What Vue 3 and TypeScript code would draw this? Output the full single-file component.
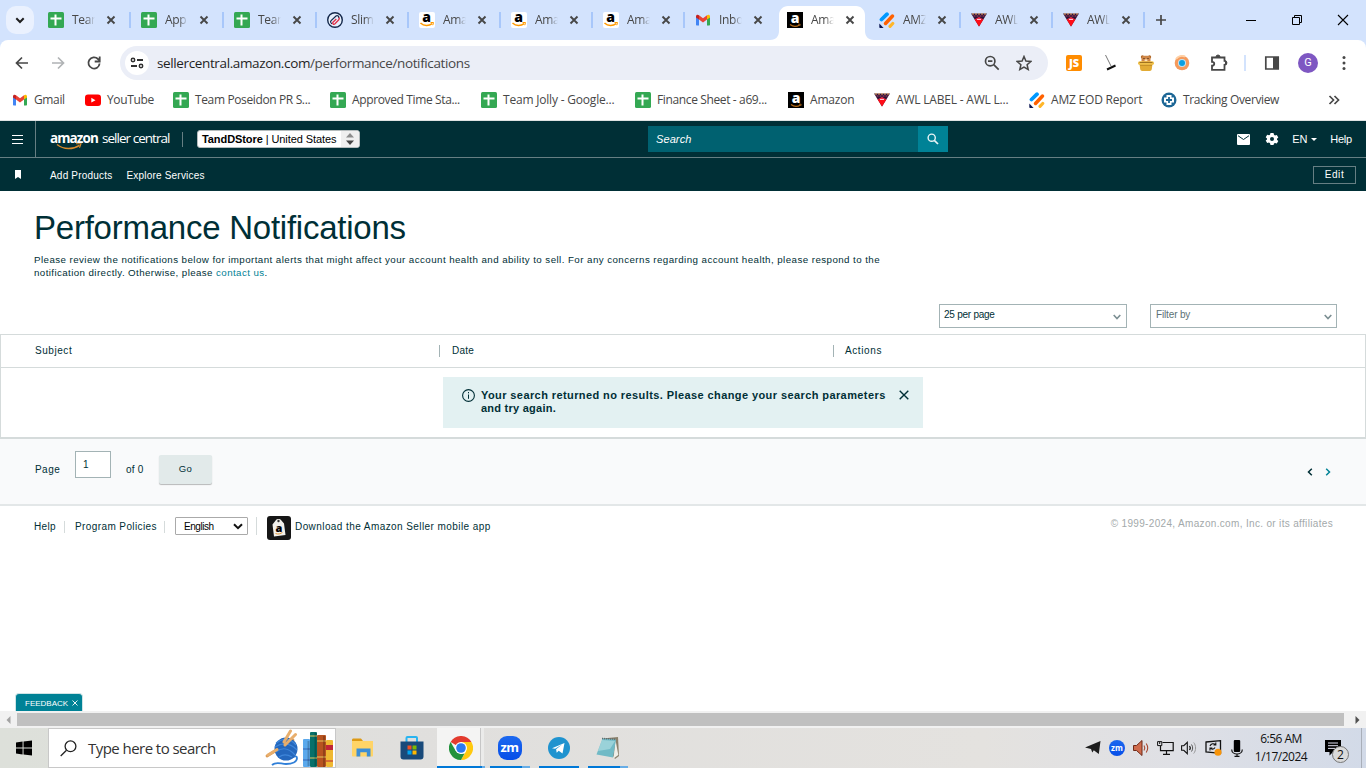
<script setup lang="ts">
interface Tab { icon: string; title: string; active?: boolean; sep?: boolean; wide?: boolean }
const tabs: Tab[] = [
  { icon: 'sheet', title: 'Team', sep: true, wide: true },
  { icon: 'sheet', title: 'App', sep: true, wide: true },
  { icon: 'sheet', title: 'Team', sep: true, wide: true },
  { icon: 'slim', title: 'Slim', sep: true },
  { icon: 'amzw', title: 'Ama', sep: true },
  { icon: 'amzw', title: 'Ama', sep: true },
  { icon: 'amzw', title: 'Ama', sep: true },
  { icon: 'gmail', title: 'Inbox' },
  { icon: 'amzb', title: 'Ama', active: true },
  { icon: 'eod', title: 'AMZ', sep: true },
  { icon: 'awl', title: 'AWL', sep: true },
  { icon: 'awl', title: 'AWL', sep: true },
]
const bookmarks: { icon: string; title: string; cls?: string }[] = [
  { icon: 'gmail', title: 'Gmail', cls: 'tight' },
  { icon: 'youtube', title: 'YouTube', cls: 'tight' },
  { icon: 'sheet', title: 'Team Poseidon PR S...', cls: 'tight' },
  { icon: 'sheet', title: 'Approved Time Sta...', cls: 'tight' },
  { icon: 'sheet', title: 'Team Jolly - Google...' },
  { icon: 'sheet', title: 'Finance Sheet - a69...', cls: 'tight' },
  { icon: 'amzb', title: 'Amazon' },
  { icon: 'awl', title: 'AWL LABEL - AWL L...' },
  { icon: 'eod', title: 'AMZ EOD Report' },
  { icon: 'track', title: 'Tracking Overview', cls: 'tight' },
]
</script>

<template>
  <div class="screen">
    <svg class="defs" width="0" height="0">
      <symbol id="sheet" viewBox="0 0 16 16"><rect width="16" height="16" rx="1.5" fill="#34a853" /><path d="M2.5 6.5h11M7.5 2.5v11" stroke="#fff" stroke-width="2" /></symbol>
      <symbol id="slim" viewBox="0 0 16 16"><circle cx="8" cy="8" r="7.3" fill="#e6effc" stroke="#14284b" stroke-width="1.4" /><path d="M5 12 3.8 10.500c-.5-.8-.3-1.300.3-1.900L9 4c1.500-1.200 3.600.6 2.500 2.200" fill="none" stroke="#14284b" stroke-width="1.2" /><path d="M11.800 5.500c.8.9.6 1.700 0 2.300L8 11.800c-1.400 1.200-3-.4-2-1.600L9.300 7" fill="none" stroke="#e02d45" stroke-width="1.300" /></symbol>
      <symbol id="amzw" viewBox="0 0 16 16"><rect width="16" height="16" rx="2" fill="#fff" /><text x="7.6" y="10" text-anchor="middle" font-family="Open Sans" font-weight="800" font-size="14">a</text><path d="M1.500 11c3.500 3.200 8.300 3.100 11.700.6" fill="none" stroke="#f90" stroke-width="1.500" /><path d="M11.500 10.500h3l-.7 2.700" fill="none" stroke="#f90" /></symbol>
      <symbol id="amzb" viewBox="0 0 16 16"><rect width="16" height="16" fill="#000" /><text x="8" y="11" text-anchor="middle" font-family="Open Sans" font-weight="800" font-size="14" fill="#fff">a</text><path d="M3 12.500c3 2.300 6.500 2.300 9.500.4" fill="none" stroke="#b56b18" stroke-width="1.200" /><path d="M11 12.200h2.200l-.5 1.800" fill="none" stroke="#b56b18" stroke-width=".8" /></symbol>
      <symbol id="gmail" viewBox="0 0 16 16"><path d="M1 4v8.500c0 .6.400 1 1 1h2V6.500z" fill="#4285f4" /><path d="M15 4v8.500c0 .6-.4 1-1 1h-2V6.500z" fill="#34a853" /><path d="M4 3.200 8 6.300l4-3.100v4.300l-4 3-4-3z" fill="#ea4335" /><path d="M1 4.500C1 2.500 2.800 2.200 4 3.200v4.300L1 5.400z" fill="#c5221f" /><path d="M15 4.500c0-2-1.800-2.300-3-1.300v4.300l3-2.100z" fill="#fbbc04" /></symbol>
      <symbol id="youtube" viewBox="0 0 16 16"><rect y="2.500" width="16" height="11.500" rx="3" fill="#f00" /><path d="M6.300 5.800v4.800l4.200-2.400z" fill="#fff" /></symbol>
      <symbol id="eod" viewBox="0 0 16 16"><path d="M2.500 7.500 8 2.200" stroke="#0099ff" stroke-width="3.800" stroke-linecap="round" /><path d="M6.500 11.500 13.500 4" stroke="#ff6100" stroke-width="3.500" stroke-linecap="round" /><path d="M11 14.300l2.700-2.800" stroke="#ffb629" stroke-width="3.200" stroke-linecap="round" /><path d="M.3 11.500 4.600 16H1.500C.7 16 .3 15.600.3 15z" fill="#0a1551" /></symbol>
      <symbol id="awl" viewBox="0 0 16 16"><path d="M0 1.500h16L8 14.500z" fill="#301236" /><path d="M1 2h14" stroke="#f2a65e" stroke-width="1" stroke-dasharray="2 1" /><path d="M2.500 4h11" stroke="#a5486b" stroke-width="1" stroke-dasharray="2 1" /><path d="M3.500 7.300h9L8 14.500z" fill="#ff0d18" /><path d="M3.500 7.500 8 5l4.500 2.500z" fill="#f0304a" /><path d="M6 7.500h4" stroke="#ffc5d0" stroke-width="1" /></symbol>
      <symbol id="track" viewBox="0 0 16 16"><circle cx="8" cy="8" r="7.500" fill="#1d6796" /><path d="M5.500 3h5v2.500H13v5h-2.500V13h-5v-2.500H3v-5h2.500z" fill="#fff" /><path d="M8 5v6M5 8h6" stroke="#1d6796" stroke-width="1.800" /></symbol>
      <symbol id="x" viewBox="0 0 10 10"><path d="M1.500 1.500l7 7M8.500 1.500l-7 7" stroke="currentColor" stroke-width="1.900" fill="none" /></symbol>
    </svg>

    <!-- Tab strip -->
    <div class="tabstrip">
      <div class="tabsearch"><svg width="10" height="7" viewBox="0 0 10 7"><path d="M1.300 1.300 5 5l3.700-3.700" fill="none" stroke="#1f1f1f" stroke-width="2" /></svg></div>
      <div v-for="(t, i) in tabs" :key="i" class="tab" :class="{ active: t.active, sep: t.sep, wide: t.wide }">
        <svg v-if="t.active" class="shape" width="104" height="34" viewBox="0 0 104 34"><path d="M0 34c6 0 9-4 9-9V9c0-5 4-9 9-9h68c5 0 9 4 9 9v16c0 5 3 9 9 9z" fill="#fff" /></svg>
        <svg class="fav"><use :href="'#' + t.icon" /></svg>
        <span class="tabtitle">{{ t.title }}</span>
        <svg class="tabx"><use href="#x" /></svg>
      </div>
      <svg class="newtab" width="12" height="12" viewBox="0 0 12 12"><path d="M6 1v10M1 6h10" stroke="#474747" stroke-width="1.700" /></svg>
      <div class="winctl">
        <svg width="12" height="12" viewBox="0 0 12 12"><path d="M1 6.500h10" stroke="#000" /></svg>
        <svg width="12" height="12" viewBox="0 0 12 12"><path d="M1.500 3.500h7v7h-7zM3.500 3.500v-2h7v7h-2" fill="none" stroke="#000" /></svg>
        <svg width="12" height="12" viewBox="0 0 12 12"><path d="M1 1l10 10M11 1 1 11" stroke="#000" stroke-width="1.100" /></svg>
      </div>
    </div>

    <!-- Toolbar -->
    <div class="toolwrap"><div class="toolbar">
      <div class="navs">
        <svg viewBox="0 0 16 16"><path d="M14 8H3M8 2.500 2.500 8 8 13.500" fill="none" stroke="#474747" stroke-width="1.700" /></svg>
        <svg viewBox="0 0 16 16"><path d="M2 8h11M8 2.500 13.500 8 8 13.500" fill="none" stroke="#b0b3b5" stroke-width="1.700" /></svg>
        <svg viewBox="0 0 16 16"><path d="M13.600 8.500A5.600 5.600 0 1 1 12 4l1.500 1.500" fill="none" stroke="#474747" stroke-width="1.800" /><path d="M13.700 1.500v5h-5" fill="none" stroke="#474747" stroke-width="1.800" /></svg>
      </div>
      <div class="omnibox">
        <div class="site"><svg width="14" height="12" viewBox="0 0 14 12"><path d="M7 3h6M1 9h6" stroke="#303030" stroke-width="1.800" /><circle cx="3" cy="3" r="1.700" fill="none" stroke="#303030" stroke-width="1.500" /><circle cx="11" cy="9" r="1.700" fill="none" stroke="#303030" stroke-width="1.500" /></svg></div>
        <span class="url"><b>sellercentral.amazon.com</b>/performance/notifications</span>
        <svg class="zoomi" width="16" height="16" viewBox="0 0 16 16"><circle cx="6.200" cy="6.200" r="4.700" fill="none" stroke="#474747" stroke-width="1.700" /><path d="M9.700 9.700l5 5M4 6.200h4.400" stroke="#474747" stroke-width="1.700" /></svg>
        <svg width="16" height="16" viewBox="0 0 16 16"><path d="M8 1.500l1.900 4.600 4.900.4-3.700 3.200 1.100 4.800L8 12l-4.200 2.500 1.100-4.800L1.200 6.500l4.900-.4z" fill="none" stroke="#474747" stroke-width="1.500" /></svg>
      </div>
      <div class="exts">
        <span class="js">JS</span>
        <svg viewBox="0 0 16 16"><path d="M3.500 0 9 11" stroke="#777" stroke-width="1" /><path d="M5 14.500l8.500-4" stroke="#111" stroke-width="2" /></svg>
        <svg viewBox="0 0 16 16"><circle cx="4.500" cy="2" r="1.700" fill="#b06727" /><circle cx="11.500" cy="2" r="1.700" fill="#b06727" /><rect x="3.500" y=".8" width="9" height="8" rx="3" fill="#cf8748" /><path d="M5.500 3.500h1M9.500 3.500h1" stroke="#3a2010" stroke-width="1.200" /><ellipse cx="8" cy="5.200" rx="1.600" ry="1" fill="#fce3bd" /><path d="M1.500 9h13l-.7 5c-.1 1.200-1 2-2 2H4.200c-1 0-1.900-.8-2-2z" fill="#e2ab35" /><rect y="6.300" width="16" height="3.700" rx="1.800" fill="#f0c04a" /><path d="M1.500 7.500h13" stroke="#8d5f16" stroke-width=".8" /><path d="M2 10.300h12" stroke="#b98322" stroke-width=".8" /></svg>
        <svg viewBox="0 0 16 16"><circle cx="8" cy="8" r="7.300" fill="#f59a5c" /><path d="M2 4a7.500 7.500 0 0 1 9-2.500" stroke="#ffd1a6" stroke-width="2" fill="none" /><circle cx="8" cy="8" r="4" fill="#bfe3f5" /><circle cx="8" cy="8" r="3" fill="#0aa0e2" /></svg>
        <svg class="puzzle" viewBox="0 0 18 18"><path d="M2 3.500h12.500v3.300c2 0 2 4 0 4v5H2v-4.200c3 0 3-3.800 0-3.800z" fill="none" stroke="#474747" stroke-width="1.800" /><path d="M6 3a2 2 0 0 1 4 0M15 7a1.900 1.900 0 0 1 0 3.800" fill="#474747" stroke="#474747" /></svg>
        <i class="extsep"></i>
        <svg viewBox="0 0 16 16"><path d="M1.800 2h12.400v12H1.800z" fill="none" stroke="#474747" stroke-width="1.700" /><path d="M9 2h5v12H9z" fill="#474747" /></svg>
        <span class="avatar">G</span>
        <svg viewBox="0 0 16 16"><g fill="#474747"><circle cx="8" cy="2.500" r="1.500" /><circle cx="8" cy="8" r="1.500" /><circle cx="8" cy="13.500" r="1.500" /></g></svg>
      </div>
    </div></div>

    <!-- Bookmarks -->
    <div class="bookmarks">
      <div v-for="b in bookmarks" :key="b.title" class="bm" :class="b.cls"><svg class="fav"><use :href="'#' + b.icon" /></svg><span>{{ b.title }}</span></div>
      <svg class="more" width="12" height="10" viewBox="0 0 12 10"><path d="M1.500 1 5.500 5l-4 4M6.500 1l4 4-4 4" fill="none" stroke="#474747" stroke-width="1.700" /></svg>
    </div>

    <!-- Seller Central header -->
    <header class="schead">
      <div class="burger"><svg width="11" height="9" viewBox="0 0 11 9"><path d="M0 .5h11M0 4.500h11M0 8.500h11" stroke="#fff" stroke-width="1.100" /></svg></div>
      <div class="logo"><b>amazon</b><span>seller central</span><svg width="26" height="8" viewBox="0 0 26 8"><path d="M1 1.500c7 5.500 16 5 22.500.8" fill="none" stroke="#d98a2b" stroke-width="1.500" /><path d="M20 .8h5l-1.500 4" fill="none" stroke="#d98a2b" stroke-width="1.100" /></svg></div>
      <i class="vbar"></i>
      <div class="store"><span class="storetext"><b>TandDStore</b> | United States</span><span class="spin"><svg width="8" height="12" viewBox="0 0 8 12"><path d="M4 0l4 4.500H0z" fill="#8c8c8c" /><path d="M4 12 0 7.500h8z" fill="#444" /></svg></span></div>
      <div class="search"><span>Search</span><div class="go"><svg width="12" height="12" viewBox="0 0 12 12"><circle cx="4.700" cy="4.700" r="3.600" fill="none" stroke="#e8f4f6" stroke-width="1.400" /><path d="M7.300 7.300 11 11" stroke="#e8f4f6" stroke-width="1.700" /></svg></div></div>
      <div class="headright">
        <svg width="13" height="11" viewBox="0 0 13 11"><rect width="13" height="11" rx="1" fill="#fff" /><path d="M1 1.700 6.500 5.500 12 1.700" fill="none" stroke="#002f36" /></svg>
        <svg class="gear" width="12" height="12" viewBox="0 0 24 24"><path fill="#fff" d="M9 0h6l1 3.700 2 1.100 3.600-1 3 5.100-2.600 2.600v1.900l2.600 2.600-3 5.100-3.600-1-2 1.100L15 24H9l-1-3.700-2-1.100-3.600 1-3-5.100L2 13v-2L-.6 8.400l3-5.100 3.600 1L8 3.700zM12 8a4 4 0 1 0 0 8 4 4 0 0 0 0-8z" /></svg>
        <span class="en">EN</span><svg class="caret" width="6" height="3" viewBox="0 0 6 3"><path d="M0 0h6L3 3z" fill="#fff" /></svg><span class="hlp">Help</span>
      </div>
    </header>
    <nav class="subnav">
      <svg width="6" height="9" viewBox="0 0 6 9"><path d="M0 0h6v9L3 7 0 9z" fill="#fff" /></svg>
      <span class="n1">Add Products</span><span class="n2">Explore Services</span>
      <button class="edit">Edit</button>
    </nav>

    <main class="page">
      <h1>Performance Notifications</h1>
      <p class="intro"><span class="l1">Please review the notifications below for important alerts that might affect your account health and ability to sell. For any concerns regarding account health, please respond to the</span><br><span class="l2">notification directly. Otherwise, please <a>contact us</a>.</span></p>
      <div class="filters">
        <div class="sel"><span>25 per page</span><svg width="8" height="6" viewBox="0 0 8 6"><path d="M.7 1 4 4.500 7.300 1" fill="none" stroke="#7c8f93" stroke-width="1.600" /></svg></div>
        <div class="sel s2"><span>Filter by</span><svg width="8" height="6" viewBox="0 0 8 6"><path d="M.7 1 4 4.500 7.300 1" fill="none" stroke="#7c8f93" stroke-width="1.600" /></svg></div>
      </div>
      <section class="table">
        <div class="thead"><span class="c1">Subject</span><span class="c2">Date</span><span class="c3">Actions</span></div>
        <div class="tbody">
          <div class="alert">
            <svg width="13" height="13" viewBox="0 0 13 13"><circle cx="6.500" cy="6.500" r="5.900" fill="none" stroke="#002f36" stroke-width="1.100" /><path d="M6.500 5.500v4.300M6.500 3v1.300" stroke="#002f36" /></svg>
            <p><span class="a1">Your search returned no results. Please change your search parameters</span><br><span class="a2">and try again.</span></p>
            <svg class="ax" width="10" height="10" viewBox="0 0 10 10"><path d="M.7.7l8.600 8.600M9.300.7.700 9.300" stroke="#002f36" stroke-width="1.400" /></svg>
          </div>
        </div>
      </section>
      <section class="pager">
        <span class="pg">Page</span><div class="num">1</div><span class="of">of 0</span><button class="gobtn">Go</button>
        <div class="arrows"><svg width="6" height="8" viewBox="0 0 6 8"><path d="M4.800.8 1.500 4l3.300 3.200" fill="none" stroke="#002f36" stroke-width="1.500" /></svg><svg width="6" height="8" viewBox="0 0 6 8"><path d="M1.200.8 4.500 4 1.200 7.200" fill="none" stroke="#008296" stroke-width="1.500" /></svg></div>
      </section>
      <footer class="foot">
        <span class="fh">Help</span><span class="fp">Program Policies</span>
        <span class="flang"><span class="lang">English<svg width="10" height="7" viewBox="0 0 10 7"><path d="M1 1.200 5 5.200l4-4" fill="none" stroke="#111" stroke-width="2" /></svg></span></span>
        <svg class="appicon" width="24" height="24" viewBox="0 0 24 24"><rect width="24" height="24" rx="3" fill="#161616" /><path d="M5.500 8.500 9 4c1-1.300 4-1.500 5 0l3 3.500L18.500 19 7 20.500z" fill="#f2f0eb" /><circle cx="11.500" cy="5" r="1.200" fill="#333" /><text x="12" y="15.500" text-anchor="middle" font-family="Open Sans" font-weight="800" font-size="11">a</text><path d="M8.500 17.500c2.500 1 5 .5 7-1.200" stroke="#e69a38" fill="none" /></svg>
        <span class="dl">Download the Amazon Seller mobile app</span>
        <span class="copy">© 1999-2024, Amazon.com, Inc. or its affiliates</span>
      </footer>
      <div class="feedback">FEEDBACK<svg width="6" height="6" viewBox="0 0 6 6"><path d="M.5.500l5 5M5.500.500l-5 5" stroke="#fff" stroke-width=".9" /></svg></div>
    </main>

    <div class="hscroll"><span><svg width="5" height="8" viewBox="0 0 5 8"><path d="M4.500 0v8L.5 4z" fill="#a3a3a3" /></svg></span><i></i><span class="r"><svg width="5" height="8" viewBox="0 0 5 8"><path d="M.5 0v8l4-4z" fill="#505050" /></svg></span></div>

    <!-- Windows taskbar -->
    <div class="taskbar">
      <div class="start"><svg width="16" height="16" viewBox="0 0 17 16"><path d="M0 2.200 7 1.200v6.300H0zM8 1l9-1v7.500H8zM0 8.500h7v6.300l-7-1zM8 8.500h9V16l-9-1.200z" fill="#000" /></svg></div>
      <div class="tsearch">
        <svg width="17" height="17" viewBox="0 0 17 17"><circle cx="10.500" cy="6.300" r="5.400" fill="none" stroke="#222" stroke-width="1.300" /><path d="M6.500 10.200.7 16" stroke="#222" stroke-width="1.300" /></svg>
        <span>Type here to search</span>
        <svg class="art" width="69" height="38" viewBox="0 0 69 38">
          <path d="M7 36c4-4 9-1 14-1 6 0 11-2 11-6 0-2-2-2-4-1" fill="none" stroke="#2f7fd8" stroke-width="1.800" />
          <path d="M2 27 28 11" stroke="#dc9a55" stroke-width="2.800" stroke-linecap="round" />
          <circle cx="21" cy="20" r="11.500" fill="#2467bd" />
          <path d="M11 14c7-5 14-5 20 2M10 18c8-5 15-4 22 3M11 23c6-5 13-4 19 3M14 28c4-3 8-3 13 0" fill="none" stroke="#3f86da" stroke-width="1.200" />
          <path d="M25.500 2 19 13M30.500 5.500 20 16" fill="none" stroke="#e8ae6c" stroke-width="3" stroke-linecap="round" /><path d="M3 26l9-5.500" stroke="#e8ae6c" stroke-width="3" stroke-linecap="round" />
          <rect x="38" y="10" width="7" height="28" rx="1" fill="#5ba9ec" /><rect x="45" y="3" width="7" height="35" rx="1" fill="#08706a" /><rect x="52" y="6" width="9" height="32" rx="1" fill="#b75320" /><rect x="61" y="11" width="7" height="27" rx="1" fill="#efb832" />
          <path d="M45 7h7M45 29h7M52 12h9M52 28h9" stroke="#e8c75c" stroke-width="1.200" /><path d="M38 20h7M38 31h7" stroke="#3566b8" stroke-width="1.200" /><path d="M61 18.500h7" stroke="#c02537" stroke-width="5" /><path d="M61 32h7" stroke="#c02537" /><path d="M43.500 12v25M50.500 4v33M59 7v31" stroke="#0003" stroke-width="2" />
        </svg>
      </div>
      <div class="apps">
        <div class="app"><svg width="22" height="20" viewBox="0 0 22 20"><path d="M0 2c0-1 .5-1.500 1.500-1.500H9L11 3H0z" fill="#dd9a15" /><path d="M0 3h21v14.500c0 .5-.5 1-1 1H1c-.5 0-1-.5-1-1z" fill="#ffd467" /><path d="M4.500 18.500V10.500h14v8h-3.700v-4.200H8.300v4.200z" fill="#3c8ed6" /></svg></div>
        <div class="app"><svg width="24" height="24" viewBox="0 0 24 24"><path d="M6.500 6V2c0-.6.300-1 1-1h8.500c.7 0 1 .4 1 1v4" fill="none" stroke="#29b4f0" stroke-width="2" /><path d="M.5 5.500h23v15a3 3 0 0 1-3 3h-17a3 3 0 0 1-3-3z" fill="#194a7a" /><path d="M7.500 9.500h4v4h-4z" fill="#f25022" /><path d="M12.500 9.500h4v4h-4z" fill="#7fba00" /><path d="M7.500 14.500h4v4h-4z" fill="#00a4ef" /><path d="M12.500 14.500h4v4h-4z" fill="#ffb900" /></svg></div>
        <div class="app on"><svg width="24" height="24" viewBox="0 0 24 24"><path d="M12 12 1.600 6A12 12 0 0 1 22.400 6H12z" fill="#e33b2e" /><path d="M12 6h10.400A12 12 0 0 1 12 24l5.200-9z" fill="#ffc90f" /><path d="M1.600 6 6.800 15 12 18l3.500-.5L12 24A12 12 0 0 1 1.600 6z" fill="#22923c" /><circle cx="12" cy="12" r="6" fill="#fff" /><circle cx="12" cy="12" r="4.800" fill="#2b7af0" /></svg></div>
        <div class="app u two"><span class="zm">zm</span></div>
        <div class="app u"><svg width="22" height="22" viewBox="0 0 22 22"><circle cx="11" cy="11" r="11" fill="#1f93cf" /><path d="M4 11.200 16.500 6 14.500 16.500l-3.800-2.700-2 1.900-.6-3.500 6-4.700-7 4.300z" fill="#fff" /></svg></div>
        <div class="app u two"><svg width="24" height="22" viewBox="0 0 24 22"><path d="M6.500 1.500 22 0l1 19-4 3z" fill="#8b806c" /><path d="M19.500 3l2.800 15-4.800 3.500z" fill="#efefe9" /><path d="M6.500 1.500 20 2.500 17 20.500.5 17.500z" fill="#71bac6" /><path d="M6 3l13 1-5 8L2 14z" fill="#b5e2e6" opacity=".6" /><path d="M6 1.500l14 .7" stroke="#5d6f74" stroke-dasharray="1 1" stroke-width="1.500" /></svg></div>
      </div>
      <div class="tray">
        <span><svg width="16" height="14" viewBox="0 0 16 14"><path d="M0 6.500 15.500 0l-1.700 13-5-3.700-1.500 2.200L6 8z" fill="#1d1d1d" /></svg></span>
        <span><i class="zm small">zm</i></span>
        <span><svg width="17" height="16" viewBox="0 0 17 16"><path d="M.5 5.500h3L9 .5v15l-5.500-5h-3z" fill="#cf6b4d" stroke="#6e2a19" /><path d="M11 5.500c1 1.500 1 3.500 0 5M13.200 3.500c2 3 2 6 0 9" fill="none" stroke="#a8472f" stroke-width="1.100" /></svg></span>
        <span><svg width="17" height="14" viewBox="0 0 17 14"><path d="M5.500 1.500h10.700v8.200H3.500V5M9.500 9.700v3.500M6 13.300h7" fill="none" stroke="#111" stroke-width="1.200" /><path d="M.6.600h4.200v4H.6zM2.700 1v2" fill="none" stroke="#111" /></svg></span>
        <span><svg width="16" height="14" viewBox="0 0 16 14"><path d="M.6 4.700h2.200L6.300 1.300v11.400L2.800 9.300H.6z" fill="none" stroke="#111" stroke-width="1.100" /><path d="M8.500 5c.8 1 .8 3 0 4" fill="none" stroke="#111" stroke-width="1.200" /><path d="M10.500 3.500c1.500 2 1.500 5 0 7" fill="none" stroke="#555" /><path d="M12.700 1.500c2.500 3 2.500 8 0 11" fill="none" stroke="#999" /></svg></span>
        <span><svg width="17" height="16" viewBox="0 0 17 16"><path d="M1 2l14.500-1.300v12.600L1 12z" fill="none" stroke="#111" stroke-width="1.300" /><path d="M5 6c1-2.500 4-3 5.500-1.300M10.800 2.500V5H8.500M10 7.500c-1 2-3.500 2.200-4.700.5M5 10.500V8h2.300" fill="none" stroke="#111" stroke-width="1.100" /><circle cx="13" cy="12.300" r="3.500" fill="#f7940a" /></svg></span>
        <span><svg width="12" height="17" viewBox="0 0 12 17"><rect x="2.800" width="6.400" height="12" rx="1" fill="#000" /><path d="M.7 9.500c0 6 10.600 6 10.600 0M6 14v2.300M3.500 16.300h5" fill="none" stroke="#111" stroke-width="1.200" /></svg></span>
      </div>
      <div class="clock"><span>6:56 AM</span><span>1/17/2024</span></div>
      <div class="notif"><svg width="16" height="16" viewBox="0 0 16 16"><path d="M0 0h16v12H8l-3.500 3.500V12H0z" fill="#000" /><path d="M3 3h10M3 5.700h10M3 8.400h7" stroke="#dde" /></svg><span class="badge">2</span></div>
      <i class="desk"></i>
    </div>
  </div>
</template>

<style>
body { margin: 0; overflow: hidden; }
</style>
<style scoped>
* { box-sizing: border-box; }
.screen { width: 1366px; height: 768px; display: flex; flex-direction: column; overflow: hidden; background: #fff; font-family: "Liberation Sans", Arial, sans-serif; color: #002f36; }
.screen > * { flex: none; }
.defs { position: absolute; }
svg { display: block; flex: none; }
i { font-style: normal; }
span { white-space: nowrap; }
.fav { width: 16px; height: 16px; }

.tabstrip { height: 40px; display: flex; background: #d3e3fd; font-family: "Open Sans", sans-serif; font-size: 12px; color: #474747; }
.tabsearch { width: 28px; height: 28px; margin: 6px 4px 0 6px; border-radius: 10px; background: #eaf1fe; display: flex; align-items: center; justify-content: center; }
.tab { position: relative; width: 92px; height: 40px; display: flex; align-items: center; padding-left: 10px; }
.tab.wide { width: 93px; }
.tab .fav, .tab .tabtitle, .tab .tabx { position: relative; }
.tabtitle { width: 23px; height: 20px; line-height: 20px; margin-left: 8px; overflow: hidden; letter-spacing: -.3px; mask-image: linear-gradient(90deg, #000 60%, transparent); }
.tabx { width: 10px; height: 10px; margin-left: 11px; color: #474747; }
.tab.sep::after { content: ""; position: absolute; right: 0; top: 12px; width: 2px; height: 16px; background: #a8c7fa; }
.shape { position: absolute; left: -7px; top: 6px; }
.newtab { margin: 14px 0 0 10px; }
.winctl { display: flex; margin: 14px 17px 0 auto; gap: 34px; }

.toolwrap { height: 46px; background: #d3e3fd; }
.toolbar { height: 46px; display: flex; align-items: center; background: #fff; border-radius: 8px 8px 0 0; padding: 0 4px 0 4px; }
.navs { display: flex; width: 116px; }
.navs svg { width: 16px; height: 16px; margin: 0 10px; }
.omnibox { width: 928px; height: 34px; border-radius: 17px; background: #ebeef7; display: flex; align-items: center; padding: 0 16px 0 5px; }
.site { width: 24px; height: 24px; border-radius: 50%; background: #fff; display: flex; align-items: center; justify-content: center; }
.url { margin-left: 8px; font: 13.5px/20px "Open Sans", sans-serif; letter-spacing: -.37px; color: #474747; }
.url b { font-weight: 400; color: #1f1f1f; }
.zoomi { margin: 0 16px 0 auto; }
.exts { display: flex; align-items: center; margin-left: 8px; }
.exts > svg { width: 16px; height: 16px; margin: 0 10px; }
.exts > .puzzle { width: 18px; height: 18px; margin: 0 8px 0 10px; }
.js { width: 16px; height: 16px; margin: 0 10px; border-radius: 2px; background: #ff8c00; color: #fff; font: 800 11px/15px "Open Sans", sans-serif; text-align: center; }
.extsep { width: 2px; height: 16px; margin: 0 8px; background: #d3e3fd; }
.avatar { width: 20px; height: 20px; margin: 0 8px; border-radius: 50%; background: #7e57c2; color: #fff; font: 11px/20px Roboto, sans-serif; text-align: center; }

.bookmarks { height: 35px; border-bottom: 1px solid #dfe3e3; padding-left: 12px; display: grid; grid-template-columns: 73px 88px 157px 151px 154px 153px 86px 155px 132px 167px 12px; align-items: center; background: #fff; font: 12px/16px "Open Sans", sans-serif; color: #474747; padding-bottom: 6px; }
.bm { display: flex; gap: 6px; align-items: center; letter-spacing: -.2px; }
.bm.tight { letter-spacing: -.37px; }

.schead { height: 37px; background: #002f36; border-bottom: 1px solid #667f83; display: flex; align-items: center; color: #fff; }
.burger { width: 36px; height: 36px; border-right: 1px solid #667f83; display: flex; align-items: center; padding: 1px 0 0 12px; }
.logo { position: relative; display: flex; margin-left: 14px; width: 119px; font: 13.5px/18px "Open Sans", sans-serif; letter-spacing: -.97px; gap: 4px; margin-top: -3px; }
.logo b { font-weight: 700; letter-spacing: -.9px; }
.logo svg { position: absolute; left: 6px; top: 14px; }
.vbar { width: 1px; height: 15px; margin-left: 13px; background: #667f83; }
.store { width: 163px; height: 18px; margin-left: 14px; border-radius: 3px; border: 1px solid #b5bcbd; background: #fff; color: #000; display: flex; overflow: hidden; }
.storetext { flex: 1; padding-left: 4px; font-size: 11px; line-height: 17px; letter-spacing: -.08px; }
.spin { width: 18px; background: #efefef; display: flex; align-items: center; justify-content: center; }
.search { width: 300px; height: 26px; margin-left: 288px; background: #006170; display: flex; align-items: center; padding-left: 8px; font: italic 11px/26px "Liberation Sans", sans-serif; letter-spacing: .1px; }
.go { width: 30px; height: 26px; margin-left: auto; background: #008296; display: flex; align-items: center; justify-content: center; }
.headright { display: flex; align-items: center; margin-left: auto; margin-right: 14px; font-size: 11px; letter-spacing: -.2px; }
.gear { margin: 0 14px 0 17px; overflow: visible; }
.headright > svg:first-child { margin-right: -1px; }
.caret { margin: 0 13px 0 4px; }
.subnav { height: 33px; background: #002f36; color: #fff; display: flex; align-items: center; padding: 0 10px 0 15px; font-size: 10px; letter-spacing: .2px; }
.subnav > svg { margin-top: -1px; }
.n1 { margin-left: 29px; margin-top: 2px; }
.n2 { margin-left: 14px; margin-top: 2px; }
.edit { margin-left: auto; width: 43px; height: 18px; border: 1px solid #667f83; background: none; color: #fff; font: 10px/16px "Liberation Sans", sans-serif; letter-spacing: .6px; padding: 0; }

.page { position: relative; height: 520px; }
h1 { margin: 0; padding: 18px 0 0 34px; font-weight: 400; font-size: 33px; line-height: 37px; letter-spacing: -.24px; }
.intro { margin: 7px 0 0 34px; font-size: 9.75px; line-height: 13px; }
.l1 { letter-spacing: .43px; }
.l2 { letter-spacing: .4px; }
.intro a { color: #008296; }
.filters { display: flex; margin: 25px 29px 6px 0; justify-content: flex-end; gap: 23px; }
.sel { width: 188px; height: 24px; border: 1px solid #a3b3b5; display: flex; justify-content: space-between; padding: 4px 5px 0 4px; font-size: 10px; line-height: 12px; letter-spacing: -.25px; }
.sel.s2 { width: 187px; color: #5c7175; padding: 4px 4px 0 5px; letter-spacing: -.15px; }
.sel svg { margin-top: 5px; }
.table { border: 1px solid #d5dbdb; border-bottom-width: 2px; height: 105px; }
.thead { height: 33px; border-bottom: 1px solid #d5dbdb; display: flex; align-items: center; font-size: 10px; line-height: 12px; letter-spacing: .55px; padding: 0 0 1px 34px; }
.c1 { width: 404px; }
.c2, .c3 { border-left: 1px solid #a3b3b5; padding-left: 12px; width: 394px; letter-spacing: .2px; }
.c3 { padding-left: 11px; letter-spacing: .6px; }
.tbody { padding: 9px 0 0 442px; }
.alert { width: 480px; height: 51px; background: #e3f1f2; display: flex; padding: 12px 14px 0 19px; }
.alert p { margin: 0 0 0 6px; font-weight: 700; font-size: 11px; line-height: 13px; }
.a1 { letter-spacing: .41px; }
.a2 { letter-spacing: .25px; }
.ax { margin: 1px 0 0 auto; }
.pager { height: 67px; background: #f9fafb; border-bottom: 2px solid #e3e7e8; display: flex; padding: 12px 34px 0 35px; font-size: 10px; letter-spacing: .45px; line-height: 12px; }
.pg { width: 40px; padding-top: 13px; }
.num { width: 36px; height: 27px; border: 1px solid #a3b3b5; background: #fff; padding: 7px 0 0 7px; }
.of { padding: 13px 0 0 15px; width: 48px; letter-spacing: .2px; }
.gobtn { width: 53px; height: 29px; margin-top: 4px; border: 0; border-radius: 2px; background: #e2eaea; box-shadow: 0 1px 1px #0004; color: #002f36; font: 9.5px/12px "Liberation Sans", sans-serif; letter-spacing: .4px; padding: 0 0 2px; }
.arrows { margin: 17px 1px 0 auto; display: flex; gap: 12px; }
.foot { display: flex; padding-left: 34px; height: 44px; align-items: center; font-size: 10px; letter-spacing: .35px; line-height: 12px; }
.fh { width: 31px; border-right: 1px solid #d5dbdb; margin-top: -3px; }
.fp { width: 100px; padding-left: 10px; border-right: 1px solid #d5dbdb; margin-top: -3px; letter-spacing: .4px; }
.flang { width: 92px; padding-left: 10px; border-right: 1px solid #d5dbdb; margin-top: -4px; }
.lang { width: 73px; height: 18px; border: 1px solid #aaa; border-radius: 1px; color: #000; display: flex; align-items: center; justify-content: space-between; padding: 1px 4px 0 8px; letter-spacing: -.45px; }
.appicon { margin: 0 4px 0 10px; }
.dl { margin-top: -3px; letter-spacing: .42px; }
.copy { margin: -8px 33px 0 auto; color: #a3a9aa; letter-spacing: .33px; }
.feedback { position: absolute; left: 15px; bottom: 0; width: 68px; height: 18px; border: 1px solid #cfe4e6; border-bottom: 0; border-radius: 4px 4px 0 0; background: #008296; color: #fff; display: flex; align-items: center; padding: 1px 4px 0 9px; font-size: 8px; letter-spacing: 0; justify-content: space-between; }

.hscroll { height: 17px; background: #f1f1f1; display: flex; align-items: center; }
.hscroll span { width: 17px; display: flex; padding-left: 6px; }
.hscroll i { width: 1327px; height: 13px; background: #c0c0c0; }
.hscroll .r { padding-left: 11px; }

.taskbar { height: 40px; display: flex; background: linear-gradient(90deg, #dde0da, #e0dfdd 30%, #e4e2df 72%, #dfe0e5 86%, #d2dae8); font-family: "Open Sans", sans-serif; color: #111; }
.start { width: 48px; display: flex; align-items: center; justify-content: center; }
.tsearch { width: 288px; border: 1px solid #c8c8c8; background: #fff; display: flex; align-items: center; padding-left: 11px; font-size: 15px; }
.tsearch span { margin-left: 11px; letter-spacing: -.55px; color: #333; }
.art { margin: 0 1px 0 auto; }
.apps { display: flex; margin-left: 2px; }
.app { position: relative; width: 49px; display: flex; align-items: center; justify-content: center; }
.app.on { background: linear-gradient(90deg, #0000 1px, #f4f4f3 1px 44px, #c6c6c6 44px 45px, #ebebea 45px 48px, #0000 48px); }
.app.on::after { content: ""; position: absolute; left: 1px; bottom: 0; width: 48px; height: 2px; background: linear-gradient(90deg, #0078d7 45px, #67ade6 45px); }
.app.u::after { content: ""; position: absolute; left: 5px; bottom: 0; width: 40px; height: 2px; background: #0078d7; }
.app.two::after { background: linear-gradient(90deg, #0078d7 32px, #67ade6 32px); }
.zm { width: 24px; height: 24px; border-radius: 9px; background: linear-gradient(#1c68ef, #064ee8); color: #fff; font: 700 13px/22px "Open Sans", sans-serif; letter-spacing: -.5px; text-align: center; }
.zm.small { width: 16px; height: 16px; border-radius: 50%; font-size: 8px; line-height: 15px; letter-spacing: 0; }
.tray { display: flex; margin-left: auto; }
.tray span { width: 24px; display: flex; align-items: center; justify-content: center; }
.clock { width: 64px; display: flex; flex-direction: column; align-items: center; font-size: 12px; line-height: 18px; padding-top: 2px; letter-spacing: -.5px; }
.notif { position: relative; width: 48px; padding: 12px 0 0 12px; }
.badge { position: absolute; left: 19px; top: 18px; width: 17px; height: 17px; border-radius: 50%; background: #dadada; border: 1px solid #777; font-size: 12px; line-height: 15px; text-align: center; }
.desk { width: 5px; border-left: 1px solid #a9afb9; }
</style>
